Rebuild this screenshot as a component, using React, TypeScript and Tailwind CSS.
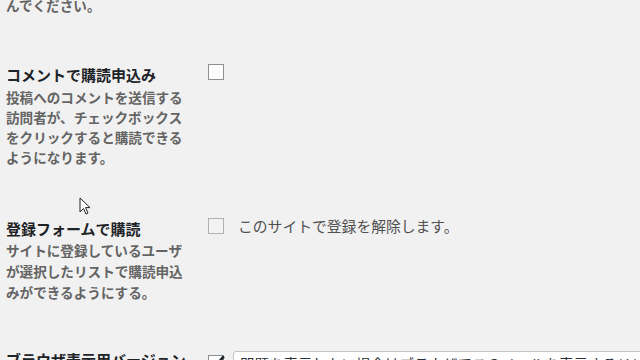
import React from 'react';

const font = { fontFamily: '"Noto Sans CJK JP", "Noto Sans", sans-serif' };

function Box({ checked, muted }: { checked?: boolean; muted?: boolean }) {
  return (
    <span
      className={`relative block h-[16px] w-[16px] shrink-0 border ${
        muted ? 'border-[#b0b0b0] bg-[#f3f3f3]' : 'border-[#8c8f94] bg-white'
      }`}
    >
      {checked && (
        <svg viewBox="0 0 16 16" className="absolute -left-[1px] -top-[3px] h-[18px] w-[18px]">
          <path d="M3 8.5 L6.5 12 L14 3" fill="none" stroke="#1d2327" strokeWidth="2.4" />
        </svg>
      )}
    </span>
  );
}

function Desc({ lines, className }: { lines: string[]; className?: string }) {
  return (
    <div className={`text-[13.6px] font-bold leading-[20px] text-[#646464] ${className ?? ''}`}>
      {lines.map((line) => (
        <div key={line}>{line}</div>
      ))}
    </div>
  );
}

export default function App() {
  return (
    <div className="relative h-[360px] w-[640px] overflow-hidden bg-[#f1f1f1]" style={font}>
      <Desc lines={['んでください。']} className="-mt-[5px] pl-[6px]" />

      <div className="mt-[50px] grid grid-cols-[202px_1fr] pl-[6px]">
        <div>
          <div className="text-[15px] font-bold leading-[20px] text-[#1d2327]">コメントで購読申込み</div>
          <Desc
            className="mt-[2px]"
            lines={['投稿へのコメントを送信する', '訪問者が、チェックボックス', 'をクリックすると購読できる', 'ようになります。']}
          />
        </div>
        <div className="-mt-[1px]">
          <Box />
        </div>
      </div>

      <div className="mt-[52px] grid grid-cols-[202px_1fr] pl-[6px]">
        <div>
          <div className="text-[15px] font-bold leading-[20px] text-[#1d2327]">登録フォームで購読</div>
          <div className="mt-[1px] text-[13.6px] font-bold leading-[21px] text-[#646464]">
            <div>サイトに登録しているユーザ</div>
            <div>が選択したリストで購読申込</div>
            <div>みができるようにする。</div>
          </div>
        </div>
        <div className="-mt-[1px] flex h-[16px] items-center gap-[14px]">
          <Box muted />
          <span className="whitespace-nowrap text-[14.8px] leading-[20px] text-[#505050]">
            このサイトで登録を解除します。
          </span>
        </div>
      </div>

      <div className="mt-[47px] grid grid-cols-[202px_1fr] pl-[6px]">
        <div className="whitespace-nowrap text-[15px] font-bold leading-[20px] text-[#1d2327]">
          ブラウザ表示用バージョン
        </div>
        <div className="flex items-start gap-[9px]">
          <div className="mt-[5px]">
            <Box checked />
          </div>
          <div className="mt-[1px] h-[30px] w-[440px] shrink-0 rounded-[3px] border border-[#c3c4c7] bg-white px-[6px] pt-[2px] text-[14.5px] leading-[20px] whitespace-nowrap text-[#2c3338]">
            問題を表示しない場合はブラウザでこのメールを表示するリンクを追加
          </div>
        </div>
      </div>

      <svg viewBox="0 0 12 19" className="absolute left-[79px] top-[197px] h-[19px] w-[12px]">
        <path d="M1 1 L1 15 L4.5 11.5 L7 17 L9 16 L6.6 10.6 L11 10.6 Z" fill="#fff" stroke="#222" strokeWidth="1" strokeLinejoin="round" />
      </svg>
    </div>
  );
}
